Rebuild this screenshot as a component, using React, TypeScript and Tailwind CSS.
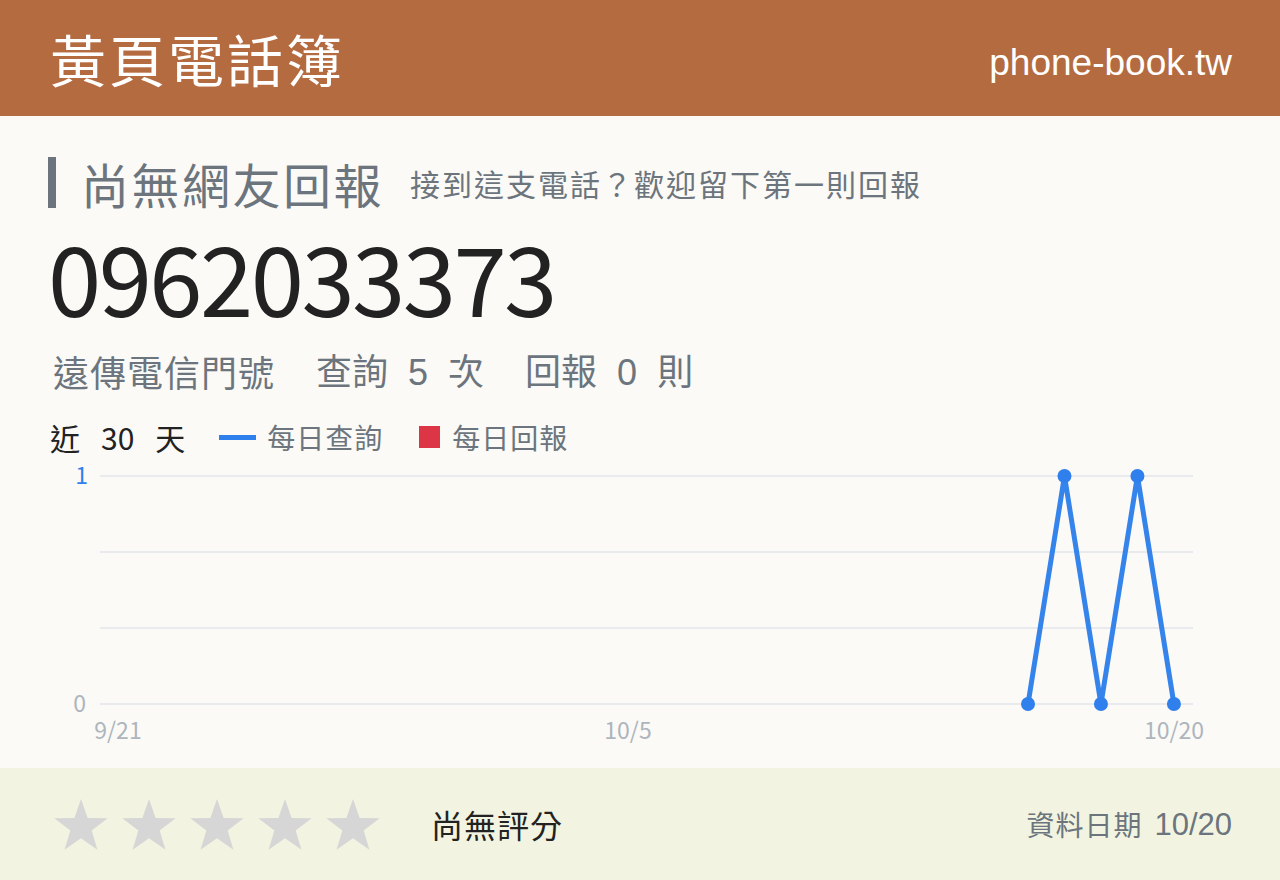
import { Fragment } from 'react';

const cjk = "font-['Liberation_Sans','Noto_Sans_CJK_TC',sans-serif]";
const han = "font-['Noto_Sans_CJK_TC',sans-serif]";

// last 30 days of lookups, 9/21 .. 10/20 (null = no data yet)
const queries: (number | null)[] = [
  ...Array(25).fill(null),
  0, 1, 0, 1, 0,
];

const X0 = 68;
const STEP = 36.48;
const Y_TOP = 20;
const Y_BOTTOM = 248;

const StarIcon = () => (
  <svg viewBox="0 0 56 51" className="w-[56px] h-[51px]">
    <polygon
      fill="#d6d6d6"
      points="28,0 34.58,18.93 54.63,19.35 38.64,31.47 44.46,50.65 28,39.2 11.54,50.65 17.36,31.47 1.37,19.35 21.42,18.93"
    />
  </svg>
);

const DailyChart = () => {
  const pts = queries
    .map((v, i) => (v === null ? null : { x: X0 + i * STEP, y: v === 1 ? Y_TOP : Y_BOTTOM }))
    .filter((p): p is { x: number; y: number } => p !== null);

  return (
    <svg width="1184" height="300" viewBox="0 0 1184 300" className="block">
      {[20, 96, 172, 248].map((y) => (
        <line key={y} x1="52" x2="1145" y1={y} y2={y} stroke="#e8eaee" strokeWidth="2" />
      ))}
      <g fontFamily="'Noto Sans CJK TC', sans-serif" fontSize="23">
        <text x="40" y="28" textAnchor="end" fill="#2f80ed">1</text>
        <text x="38" y="256" textAnchor="end" fill="#adb5bd">0</text>
        <text x="70" y="283" textAnchor="middle" fill="#adb5bd">9/21</text>
        <text x="580" y="283" textAnchor="middle" fill="#adb5bd">10/5</text>
        <text x="1126" y="283" textAnchor="middle" fill="#adb5bd">10/20</text>
      </g>
      <polyline
        points={pts.map((p) => `${p.x},${p.y}`).join(' ')}
        fill="none"
        stroke="#3584ec"
        strokeWidth="5"
        strokeLinejoin="round"
      />
      {pts.map((p, i) => (
        <Fragment key={i}>
          <circle cx={p.x} cy={p.y} r="7" fill="#2f80ed" />
        </Fragment>
      ))}
    </svg>
  );
};

export default function App() {
  return (
    <div className={`w-[1280px] h-[880px] flex flex-col bg-[#fbfaf6] ${cjk}`}>
      <header className="h-[116px] shrink-0 bg-[#b56b40] px-12 flex items-center justify-between text-white">
        <h1 className={`${han} text-[56px] leading-none tracking-[3px] pl-[2px]`}>黃頁電話簿</h1>
        <span className="font-['Liberation_Sans',sans-serif] text-[37px] leading-none mt-[8px]">phone-book.tw</span>
      </header>

      <main className="flex-1 min-h-0 overflow-hidden px-12 pt-[41px]">
        <div className="flex items-center">
          <div className="w-2 h-[51px] bg-[#6c757d]" />
          <h2 className={`${han} ml-[25px] text-[48px] leading-none tracking-[2.5px] text-[#6c757d]`}>尚無網友回報</h2>
          <p className={`${han} ml-[26px] text-[30px] leading-none tracking-[2px] text-[#6c757d]`}>
            接到這支電話？歡迎留下第一則回報
          </p>
        </div>

        <div className={`${han} mt-[20px] text-[96px] leading-none tracking-[-2.6px] text-[#222]`}>0962033373</div>

        <div className="mt-[27px] flex items-center gap-[41px] text-[36px] leading-none text-[#6c757d] pl-[5px]">
          <span className={`${han} tracking-[1px]`}>遠傳電信門號</span>
          <span className={han}>
            查詢<span className="font-['Liberation_Sans',sans-serif] mx-[20px]">5</span>次
          </span>
          <span className={han}>
            回報<span className="font-['Liberation_Sans',sans-serif] mx-[20px]">0</span>則
          </span>
        </div>

        <div className={`${han} mt-[31px] flex items-center text-[28px] leading-none`}>
          <span className="text-[#222] text-[30px] pl-[2px] flex items-center">
            近<span className="mx-[21px]">30</span>天
          </span>
          <span className="ml-[34px] w-[37px] h-[5px] bg-[#2f80ed]" />
          <span className="ml-[11px] text-[#6c757d] tracking-[1px]">每日查詢</span>
          <span className="ml-[36px] w-[21px] h-[22px] bg-[#dc3545]" />
          <span className="ml-[12px] text-[#6c757d] tracking-[1px]">每日回報</span>
        </div>

        <div className="mt-[4px]">
          <DailyChart />
        </div>
      </main>

      <footer className="h-[112px] shrink-0 bg-[#f2f4e1] px-12 flex items-center">
        <div className="flex gap-[12px] pl-[5px]">
          {[0, 1, 2, 3, 4].map((i) => (
            <StarIcon key={i} />
          ))}
        </div>
        <span className={`${han} ml-[50px] text-[32px] leading-none tracking-[1px] text-[#222]`}>尚無評分</span>
        <div className="ml-auto flex items-center text-[#6c757d]">
          <span className={`${han} text-[28px] leading-none tracking-[1px]`}>資料日期</span>
          <span className="ml-[12px] font-['Liberation_Sans',sans-serif] text-[31px] leading-none">10/20</span>
        </div>
      </footer>
    </div>
  );
}
